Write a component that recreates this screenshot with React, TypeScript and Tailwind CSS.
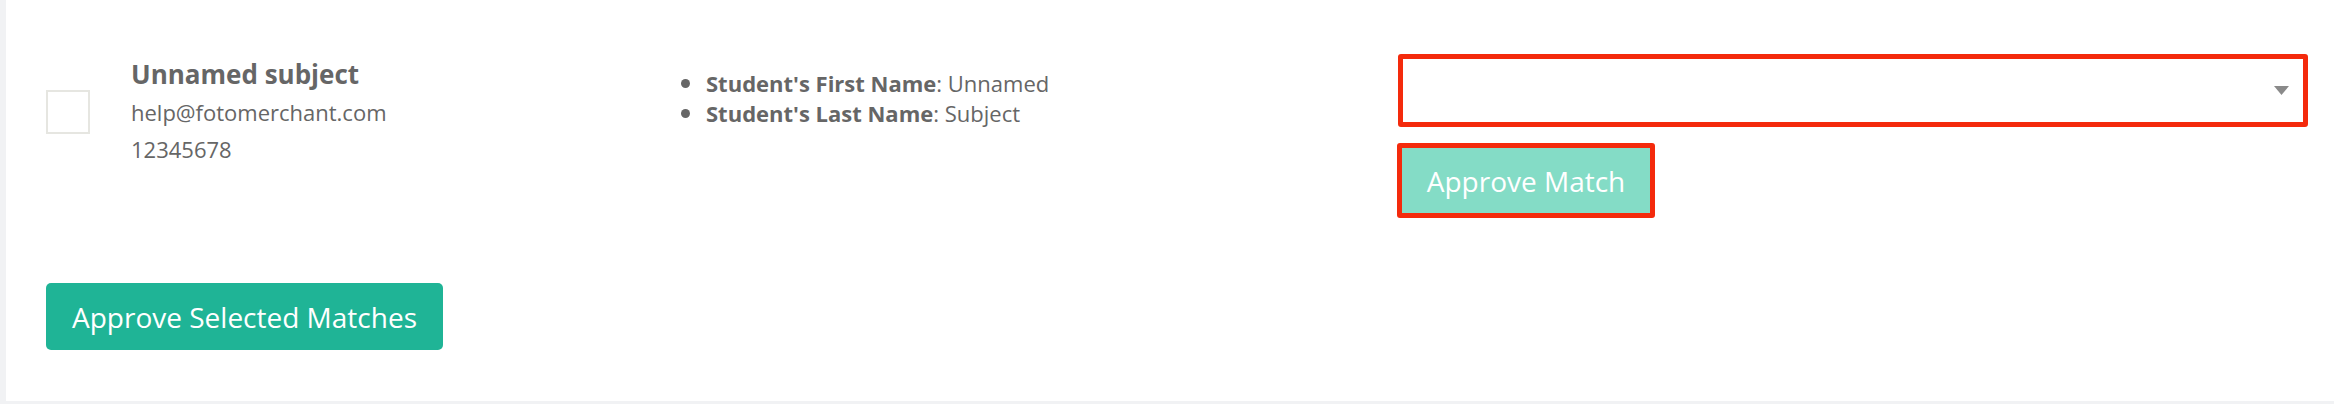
import React from "react";

export default function App() {
  const font = { fontFamily: '"Open Sans", "Noto Sans", sans-serif' };
  return (
    <div className="w-[2334px] h-[404px] bg-[#f1f2f4] overflow-hidden" style={font}>
      <div className="ml-[6px] h-[401px] bg-white pl-[40px] pr-[26px] pt-[54px] flex flex-col">
        <div className="flex items-start">
          <div className="w-[85px] pt-[36px] shrink-0">
            <div className="w-[44px] h-[44px] border-2 border-[#e6e6e1] bg-white" />
          </div>
          <div className="w-[552px] shrink-0 text-[#666666] leading-[37px]">
            <div className="text-[26px] font-bold leading-[40px]">Unnamed subject</div>
            <div className="text-[22px]">help@fotomerchant.com</div>
            <div className="text-[22px]">12345678</div>
          </div>
          <div className="w-[715px] shrink-0 pt-[14px] text-[22px] leading-[30px] text-[#666666]">
            <div className="flex items-center">
              <span className="w-[9px] h-[9px] rounded-full bg-[#666666] mr-[16px] ml-[-2px] shrink-0" />
              <span>
                <b className="font-bold">Student's First Name</b>: Unnamed
              </span>
            </div>
            <div className="flex items-center">
              <span className="w-[9px] h-[9px] rounded-full bg-[#666666] mr-[16px] ml-[-2px] shrink-0" />
              <span>
                <b className="font-bold">Student's Last Name</b>: Subject
              </span>
            </div>
          </div>
          <div className="w-[910px] shrink-0 flex flex-col items-start gap-[16px]">
            <div className="w-full h-[73px] border-[5px] border-[#f42a0c] rounded-[3px] bg-white flex items-center justify-end pr-[14px]">
              <svg width="15" height="9" viewBox="0 0 15 9">
                <polygon points="0,0 15,0 7.5,9" fill="#8a8a8a" />
              </svg>
            </div>
            <button className="ml-[-1px] w-[258px] h-[75px] border-[5px] border-[#f42a0c] rounded-[3px] bg-[#84dcc6] text-white text-[28px] flex items-center justify-center">
              Approve Match
            </button>
          </div>
        </div>
        <div className="mt-[65px]">
          <button className="w-[397px] h-[67px] rounded-[5px] bg-[#1fb496] text-white text-[28px] flex items-center justify-center">
            Approve Selected Matches
          </button>
        </div>
      </div>
    </div>
  );
}
